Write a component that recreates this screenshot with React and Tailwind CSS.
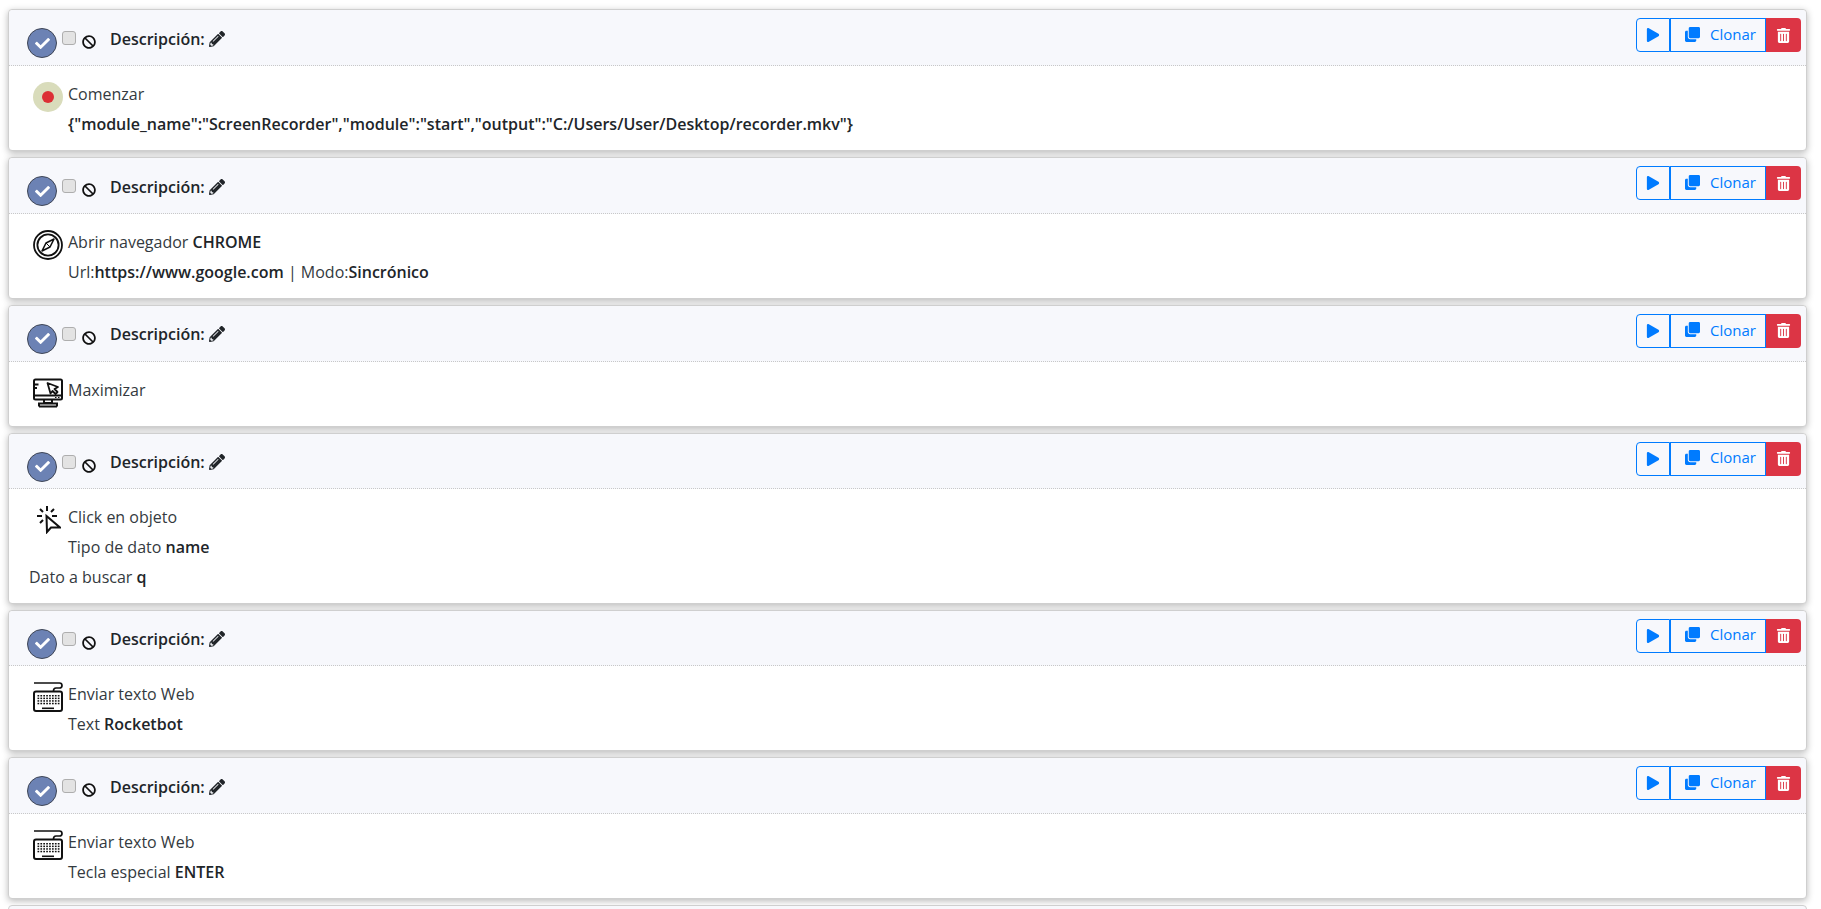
import React from "react";
import { FaBan, FaCheck, FaPencilAlt, FaPlay, FaClone, FaTrashAlt } from "react-icons/fa";

const RecordIcon = () => (
  <div className="w-[30px] h-[30px] rounded-full bg-[#d9dcbb] flex items-center justify-center">
    <div className="w-[12px] h-[12px] rounded-full bg-[#dc3035]" />
  </div>
);

const CompassIcon = () => (
  <svg width="30" height="30" viewBox="0 0 30 30" fill="none" stroke="#111">
    <circle cx="15" cy="15" r="14" strokeWidth="1.8" />
    <circle cx="15" cy="15" r="10.6" strokeWidth="1.8" />
    <path d="M21 9 L17 17 L9 21 L13 13 Z" strokeWidth="1.6" strokeLinejoin="round" />
    <path d="M13 13 L17 17" strokeWidth="1" />
  </svg>
);

const MonitorIcon = () => (
  <svg width="30" height="30" viewBox="0 0 30 30" fill="none" stroke="#111" strokeWidth="2">
    <rect x="1" y="1.5" width="28" height="20" rx="1.5" />
    <path d="M1 17.5 H29" />
    <path d="M1.5 6.5 H5.5 M1.5 10 H4" />
    <path d="M14.5 5 L25 9 L21.5 11 L24.5 14 L22.5 16 L19.5 13 L17.5 15.5 Z" strokeLinejoin="round" strokeWidth="1.8" />
    <path d="M11 21.5 V25 H19 V21.5 M6 28.5 H24 M6 28.5 V25.5 H24 V28.5" />
    <path d="M22 19.5 H23.5 M25 19.5 H26.5" strokeWidth="1" />
  </svg>
);

const ClickIcon = () => (
  <svg width="24" height="28" viewBox="0 0 24 28" fill="none" stroke="#111" strokeWidth="2" strokeLinecap="butt">
    <path d="M9.5 10 L10 26 L14 21.5 L23 21.5 Z" strokeLinejoin="miter" />
    <path d="M10 0 V5 M3 3 L6 6 M0 10 H5 M3 17 L6 14 M17 3 L14 6 M20 10 H15" />
  </svg>
);

const KeyboardIcon = () => {
  const dots = [];
  for (let r = 0; r < 4; r++) {
    for (let c = 0; c < 8; c++) {
      dots.push(<rect key={`${r}-${c}`} x={4.5 + c * 2.9} y={13 + r * 2.6} width="1.7" height="1.5" fill="#111" stroke="none" />);
    }
  }
  return (
    <svg width="30" height="30" viewBox="0 0 30 30" fill="none" stroke="#111" strokeWidth="2">
      <path d="M1 1 H26.5 Q29 1 29 3.5 Q29 6 26.5 6 H23 Q20.5 6 20.5 9" strokeWidth="1.7" />
      <rect x="1" y="9.5" width="28" height="19.5" rx="2" />
      {dots}
      <path d="M9 26.3 H21" strokeWidth="1.6" />
    </svg>
  );
};

const StepHeader = () => (
  <div className="h-[55.7px] bg-[#f7f8fc] border-b border-dotted border-[#c8c8c8] flex justify-between pl-[18px] pr-[5px] rounded-t-[4px]">
    <div className="flex items-start">
      <div className="mt-[18px] w-[30px] h-[30px] rounded-full bg-[#6c82b4] border border-[#3f4656] flex items-center justify-center shrink-0">
        <FaCheck className="text-white text-[15px]" />
      </div>
      <div className="mt-[21px] ml-[5px] w-[14px] h-[14px] rounded-[3px] bg-[#e3e3e3] border border-[#aeaeae]" />
      <FaBan className="mt-[25px] ml-[6px] text-[14px] text-[#111]" />
      <span className="mt-[16.5px] ml-[14px] text-[16px] leading-[24px] font-semibold text-[#212529]">Descripción:</span>
      <FaPencilAlt className="mt-[20.5px] ml-[4px] text-[16px] text-[#212529]" />
    </div>
    <div className="flex mt-[8px] h-[34px] text-[#007bff] text-[15px]">
      <button className="w-[34px] border border-[#007bff] rounded-l-[4px] flex items-center justify-center">
        <FaPlay className="text-[14px]" />
      </button>
      <button className="w-[96px] border border-[#007bff] flex items-center justify-center gap-[10px] pb-[2px] pl-[5px]">
        <FaClone className="text-[15px]" />
        Clonar
      </button>
      <button className="w-[35px] bg-[#dc3545] rounded-r-[4px] flex items-center justify-center text-white">
        <FaTrashAlt className="text-[15px]" />
      </button>
    </div>
  </div>
);

const Step = ({ icon, lines, extra, body }) => (
  <div className={`mb-[6px] bg-white border border-[#cfcfcf] rounded-[4px] shadow-[0_2px_7px_rgba(0,0,0,0.28)] ${body}`}>
    <StepHeader />
    <div className="pt-[13px] pl-[24px] text-[16px] leading-[30px] text-[#343a40]">
      <div className="flex">
        <div className="w-[35px] h-[30px] shrink-0 pt-[3px]">{icon}</div>
        <div>{lines}</div>
      </div>
      {extra}
    </div>
  </div>
);

const B = ({ children }) => <span className="font-semibold text-[#212529]">{children}</span>;

export default function App() {
  return (
    <div className="h-[909px] overflow-hidden bg-white pt-[9.3px] pl-[8px] pr-[14px]" style={{ fontFamily: '"Open Sans", sans-serif' }}>
      <Step
        body="h-[142px]"
        icon={<RecordIcon />}
        lines={
          <>
            <div>Comenzar</div>
            <B>{'{"module_name":"ScreenRecorder","module":"start","output":"C:/Users/User/Desktop/recorder.mkv"}'}</B>
          </>
        }
      />
      <Step
        body="h-[141.7px]"
        icon={<CompassIcon />}
        lines={
          <>
            <div>Abrir navegador <B>CHROME</B></div>
            <div>Url:<B>https://www.google.com</B> | Modo:<B>Sincrónico</B></div>
          </>
        }
      />
      <Step body="h-[121.7px]" icon={<MonitorIcon />} lines={<div>Maximizar</div>} />
      <Step
        body="h-[171px]"
        icon={<div className="pl-[4px] pt-[1px]"><ClickIcon /></div>}
        lines={
          <>
            <div>Click en objeto</div>
            <div>Tipo de dato <B>name</B></div>
          </>
        }
        extra={<div className="-ml-[4px]">Dato a buscar <B>q</B></div>}
      />
      <Step
        body="h-[141.7px]"
        icon={<KeyboardIcon />}
        lines={
          <>
            <div>Enviar texto Web</div>
            <div>Text <B>Rocketbot</B></div>
          </>
        }
      />
      <Step
        body="h-[141.3px]"
        icon={<KeyboardIcon />}
        lines={
          <>
            <div>Enviar texto Web</div>
            <div>Tecla especial <B>ENTER</B></div>
          </>
        }
      />
      <div className="h-[40px] bg-[#f7f8fc] border border-[#cfcfcf] rounded-[4px]" />
    </div>
  );
}
